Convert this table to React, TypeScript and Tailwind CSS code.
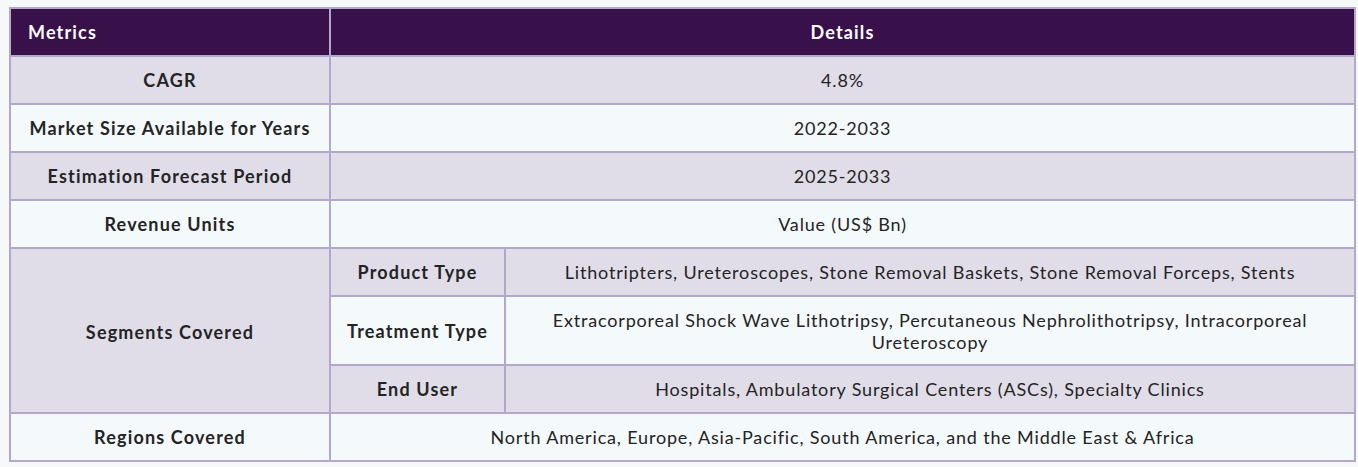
import React from "react";

const border = "border-2 border-[#b3a7cc]";
const head = `${border} font-bold tracking-[0.065em]`;

type Row = { metric: string; detail: string; shade: boolean };

const topRows: Row[] = [
  { metric: "CAGR", detail: "4.8%", shade: true },
  { metric: "Market Size Available for Years", detail: "2022-2033", shade: false },
  { metric: "Estimation Forecast Period", detail: "2025-2033", shade: true },
  { metric: "Revenue Units", detail: "Value (US$ Bn)", shade: false },
];

export default function App() {
  return (
    <div className="min-h-screen bg-[#f6f8fa] pt-[7px] pl-[9px] font-['Lato','Liberation_Sans',sans-serif] text-[18px] leading-[22px] tracking-[0.046em] text-[#242424]">
      <table className="w-[1347px] border-collapse">
        <thead>
          <tr className="h-[48px] bg-[#38104a] text-white">
            <th className={`${head} w-[320px] text-left pl-[17px]`}>Metrics</th>
            <th className={head} colSpan={2}>Details</th>
          </tr>
        </thead>
        <tbody>
          {topRows.map(r => (
            <tr key={r.metric} className={`h-[48px] ${r.shade ? "bg-[#e0dde9]" : "bg-[#f4f9fc]"}`}>
              <td className={`${head} text-center`}>{r.metric}</td>
              <td className={`${border} text-center`} colSpan={2}>{r.detail}</td>
            </tr>
          ))}
          <tr className="h-[48px] bg-[#e0dde9]">
            <td className={`${head} text-center pt-[3px]`} rowSpan={3}>Segments Covered</td>
            <td className={`${head} text-center w-[175px]`}>Product Type</td>
            <td className={`${border} text-center`}>
              Lithotripters, Ureteroscopes, Stone Removal Baskets, Stone Removal Forceps, Stents
            </td>
          </tr>
          <tr className="h-[69px] bg-[#f4f9fc]">
            <td className={`${head} text-center`}>Treatment Type</td>
            <td className={`${border} text-center`}>
              Extracorporeal Shock Wave Lithotripsy, Percutaneous Nephrolithotripsy, Intracorporeal
              <br />
              Ureteroscopy
            </td>
          </tr>
          <tr className="h-[48px] bg-[#e0dde9]">
            <td className={`${head} text-center`}>End User</td>
            <td className={`${border} text-center`}>
              Hospitals, Ambulatory Surgical Centers (ASCs), Specialty Clinics
            </td>
          </tr>
          <tr className="h-[48px] bg-[#f4f9fc]">
            <td className={`${head} text-center`}>Regions Covered</td>
            <td className={`${border} text-center`} colSpan={2}>
              North America, Europe, Asia-Pacific, South America, and the Middle East &amp; Africa
            </td>
          </tr>
        </tbody>
      </table>
    </div>
  );
}
